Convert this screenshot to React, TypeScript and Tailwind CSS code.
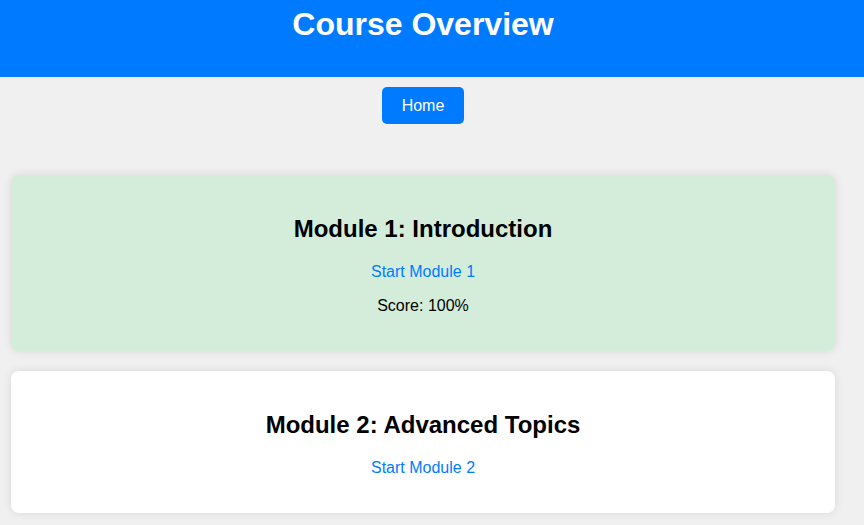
const modules = [
  { title: "Module 1: Introduction", link: "Start Module 1", score: "100%", done: true },
  { title: "Module 2: Advanced Topics", link: "Start Module 2", score: null, done: false },
];

export default function App() {
  return (
    <div className="min-h-screen bg-[#f0f0f0] font-['Liberation_Sans',Arial,sans-serif] text-black">
      <header className="h-[77px] bg-[#007bff]">
        <div className="w-[846px] pt-[6px] text-center">
          <h1 className="text-[32px] font-bold leading-[37px] text-white">Course Overview</h1>
        </div>
      </header>

      <div className="w-[846px]">
        <nav className="flex justify-center pt-[10px]">
          <a
            href="#"
            className="rounded-[5px] bg-[#007bff] px-5 py-[9px] text-[16px] leading-[19px] text-white"
          >
            Home
          </a>
        </nav>

        <main className="flex flex-col gap-[20px] px-[11px] pt-[51px]">
          {modules.map((m) => (
            <div
              key={m.title}
              className={`rounded-lg p-5 text-center shadow-[0_0_10px_rgba(0,0,0,0.1)] ${
                m.done ? "bg-[#d4edda]" : "bg-white"
              }`}
            >
              <h3 className="mt-[20px] mb-[20px] text-[24px] font-bold leading-[27.6px]">
                {m.title}
              </h3>
              <p className="mb-4 text-[16px] leading-[18.4px]">
                <a href="#" className="text-[#007bff]">
                  {m.link}
                </a>
              </p>
              {m.score && (
                <p className="mb-4 text-[16px] leading-[18.4px]">Score: {m.score}</p>
              )}
            </div>
          ))}
        </main>
      </div>
    </div>
  );
}
